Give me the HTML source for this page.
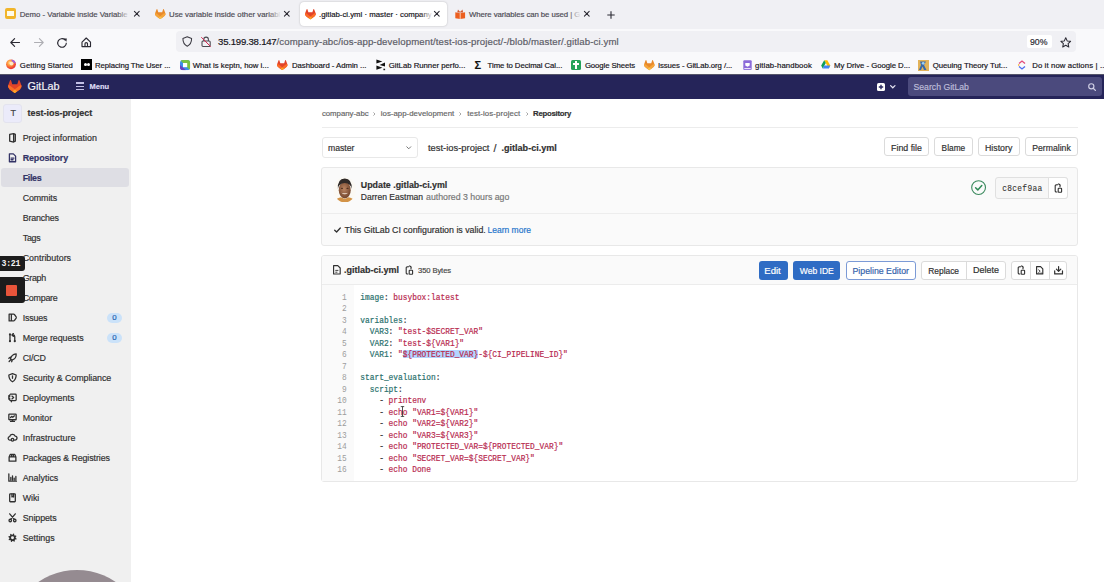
<!DOCTYPE html>
<html><head><meta charset="utf-8"><style>
html,body{margin:0;padding:0;width:1104px;height:582px;overflow:hidden;background:#fff;font-family:"Liberation Sans",sans-serif;}
#root{position:relative;width:1104px;height:582px;overflow:hidden;}
.t{position:absolute;white-space:pre;-webkit-text-stroke:0.18px currentColor;}
svg{overflow:visible;}
</style></head><body><div id="root">
<div style="position:absolute;left:0px;top:0px;width:1104px;height:29px;background:#f0f0f4;border-radius:0px;"></div>
<div style="position:absolute;left:300px;top:2px;width:147px;height:24px;background:#ffffff;border-radius:4px;box-shadow:0 0 2px rgba(0,0,0,0.25);"></div>
<div style="position:absolute;left:5px;top:8px;width:10.5px;height:11px;background:#f1b52a;border-radius:2px;"></div>
<div style="position:absolute;left:6.6px;top:11px;width:7.3px;height:5px;background:#fffbe8;border-radius:0px;"></div>
<svg style="position:absolute;left:133.8px;top:11.4px;" width="5.6" height="5.6" viewBox="0 0 5.6 5.6"><path d="M0.4 0.4 L5.2 5.2 M5.2 0.4 L0.4 5.2" stroke="#2b2a33" stroke-width="1.05" stroke-linecap="round"/></svg>
<svg style="position:absolute;left:283.8px;top:11.4px;" width="5.6" height="5.6" viewBox="0 0 5.6 5.6"><path d="M0.4 0.4 L5.2 5.2 M5.2 0.4 L0.4 5.2" stroke="#2b2a33" stroke-width="1.05" stroke-linecap="round"/></svg>
<svg style="position:absolute;left:433.8px;top:11.4px;" width="5.6" height="5.6" viewBox="0 0 5.6 5.6"><path d="M0.4 0.4 L5.2 5.2 M5.2 0.4 L0.4 5.2" stroke="#2b2a33" stroke-width="1.05" stroke-linecap="round"/></svg>
<svg style="position:absolute;left:583.8px;top:11.4px;" width="5.6" height="5.6" viewBox="0 0 5.6 5.6"><path d="M0.4 0.4 L5.2 5.2 M5.2 0.4 L0.4 5.2" stroke="#2b2a33" stroke-width="1.05" stroke-linecap="round"/></svg>
<svg style="position:absolute;left:607px;top:10.6px;" width="8" height="8" viewBox="0 0 8 8"><path d="M4 0.3 V7.7 M0.3 4 H7.7" stroke="#2b2a33" stroke-width="1.1"/></svg>
<div style="position:absolute;left:0px;top:29px;width:1104px;height:45px;background:#f9f9fb;border-radius:0px;"></div>
<div style="position:absolute;left:176px;top:31px;width:900px;height:21px;background:#f0f0f4;border-radius:4px;"></div>
<div style="position:absolute;left:1026.5px;top:35px;width:25.5px;height:13px;background:#ffffff;border-radius:2px;"></div>
<div style="position:absolute;left:0px;top:74px;width:1104px;height:24.5px;background:#252459;border-radius:0px;"></div>
<div style="position:absolute;left:908px;top:76.6px;width:194px;height:19.4px;background:#4b4a7d;border-radius:3px;"></div>
<div style="position:absolute;left:0px;top:98.5px;width:131px;height:484px;background:#f0f0f0;border-radius:0px;"></div>
<div style="position:absolute;left:3.3px;top:103.6px;width:19px;height:19px;background:#ebebfa;border-radius:3px;border:1px solid #e3e3ee;box-sizing:border-box;"></div>
<div style="position:absolute;left:1.4px;top:168px;width:127.8px;height:19px;background:#dedee4;border-radius:3px;"></div>
<div style="position:absolute;left:107px;top:312.8px;width:14.8px;height:10px;background:#cbe2f9;border-radius:5px;"></div>
<div style="position:absolute;left:107px;top:332.8px;width:14.8px;height:10px;background:#cbe2f9;border-radius:5px;"></div>
<svg style="position:absolute;left:373.2px;top:111.6px;" width="2.5" height="4" viewBox="0 0 2.5 4"><path d="M0.4 0.4 L2 2 L0.4 3.6" stroke="#8a8a8a" stroke-width="0.75" fill="none"/></svg>
<svg style="position:absolute;left:459.3px;top:111.6px;" width="2.5" height="4" viewBox="0 0 2.5 4"><path d="M0.4 0.4 L2 2 L0.4 3.6" stroke="#8a8a8a" stroke-width="0.75" fill="none"/></svg>
<svg style="position:absolute;left:525.5px;top:111.6px;" width="2.5" height="4" viewBox="0 0 2.5 4"><path d="M0.4 0.4 L2 2 L0.4 3.6" stroke="#8a8a8a" stroke-width="0.75" fill="none"/></svg>
<div style="position:absolute;left:321.5px;top:127px;width:756.5px;height:1px;background:#ececec;border-radius:0px;"></div>
<div style="position:absolute;left:321.6px;top:137.4px;width:96.8px;height:20.3px;background:#ffffff;border:1px solid #e8e8e8;box-sizing:border-box;border-radius:3px;"></div>
<div style="position:absolute;left:884px;top:137.4px;width:45px;height:19.1px;background:#ffffff;border:1px solid #dbdbdb;box-sizing:border-box;border-radius:3px;"></div>
<div style="position:absolute;left:934.2px;top:137.4px;width:38.39999999999998px;height:19.1px;background:#ffffff;border:1px solid #dbdbdb;box-sizing:border-box;border-radius:3px;"></div>
<div style="position:absolute;left:977.6px;top:137.4px;width:42.10000000000002px;height:19.1px;background:#ffffff;border:1px solid #dbdbdb;box-sizing:border-box;border-radius:3px;"></div>
<div style="position:absolute;left:1025.2px;top:137.4px;width:52.59999999999991px;height:19.1px;background:#ffffff;border:1px solid #dbdbdb;box-sizing:border-box;border-radius:3px;"></div>
<div style="position:absolute;left:321px;top:167px;width:757px;height:79px;background:#fafafa;border:1px solid #e8e8e8;box-sizing:border-box;border-radius:3px;"></div>
<div style="position:absolute;left:322px;top:213px;width:755px;height:1px;background:#ededed;border-radius:0px;"></div>
<div style="position:absolute;left:995.3px;top:177px;width:72.3px;height:21.7px;background:#f7f7f7;border:1px solid #e0e0e0;box-sizing:border-box;border-radius:3px;"></div>
<div style="position:absolute;left:1048.4px;top:177px;width:19.2px;height:21.7px;background:#ffffff;border:1px solid #e0e0e0;box-sizing:border-box;border-radius:3px;border-top-left-radius:0;border-bottom-left-radius:0;"></div>
<div style="position:absolute;left:321px;top:255px;width:757px;height:227px;background:#ffffff;border:1px solid #e8e8e8;box-sizing:border-box;border-radius:3px;"></div>
<div style="position:absolute;left:322px;top:256px;width:755px;height:28px;background:#fafafa;border-radius:2px;"></div>
<div style="position:absolute;left:322px;top:284px;width:755px;height:1px;background:#ececec;border-radius:0px;"></div>
<div style="position:absolute;left:322px;top:285px;width:32px;height:196px;background:#fafafa;border-radius:0px;"></div>
<div style="position:absolute;left:758.5px;top:260.9px;width:29.2px;height:18.7px;background:#2f6cc4;border-radius:3px;"></div>
<div style="position:absolute;left:793.1px;top:260.9px;width:47.3px;height:18.7px;background:#2f6cc4;border-radius:3px;"></div>
<div style="position:absolute;left:845.5px;top:260.9px;width:70.5px;height:18.7px;background:#ffffff;border:1px solid #7b9ad6;box-sizing:border-box;border-radius:3px;"></div>
<div style="position:absolute;left:921.4px;top:260.9px;width:84.2px;height:18.7px;background:#ffffff;border:1px solid #dbdbdb;box-sizing:border-box;border-radius:3px;"></div>
<div style="position:absolute;left:966.2px;top:260.9px;width:1px;height:18.7px;background:#dbdbdb;border-radius:0px;"></div>
<div style="position:absolute;left:1011.4px;top:260.9px;width:56px;height:18.7px;background:#ffffff;border:1px solid #dbdbdb;box-sizing:border-box;border-radius:3px;"></div>
<div style="position:absolute;left:1030.3px;top:260.9px;width:1px;height:18.7px;background:#dbdbdb;border-radius:0px;"></div>
<div style="position:absolute;left:1048.5px;top:260.9px;width:1px;height:18.7px;background:#dbdbdb;border-radius:0px;"></div>
<div style="position:absolute;left:402.762px;top:350.2px;width:75.488px;height:8.2px;background:#b4d5fe;border-radius:0px;"></div>
<svg style="position:absolute;left:155px;top:8.5px;" width="10.5" height="10.08" viewBox="0 0 25 24"><path d="m24.507 9.5-.034-.09L21.082.562a.896.896 0 0 0-1.694.091l-2.29 7.01H7.825L5.535.653a.898.898 0 0 0-1.694-.09L.451 9.411.416 9.5a6.297 6.297 0 0 0 2.09 7.278l.012.01.03.022 5.16 3.867 2.560 1.935 1.554 1.176a1.051 1.051 0 0 0 1.268 0l1.555-1.176 2.56-1.935 5.197-3.890.014-.01A6.297 6.297 0 0 0 24.507 9.5z" fill="#e8892a"/><path d="m24.507 9.5-.034-.09a11.44 11.44 0 0 0-4.56 2.051l-7.447 5.632 4.742 3.584 5.197-3.89.014-.01A6.297 6.297 0 0 0 24.507 9.5z" fill="#f5a53a"/><path d="m7.707 20.677 2.56 1.935 1.555 1.176a1.051 1.051 0 0 0 1.268 0l1.555-1.176 2.56-1.935-4.743-3.584-4.755 3.584z" fill="#f9c24a"/><path d="M5.01 11.461a11.43 11.43 0 0 0-4.56-2.05L.416 9.5a6.297 6.297 0 0 0 2.09 7.278l.012.01.03.022 5.16 3.867 4.745-3.584-7.444-5.632z" fill="#f5a53a"/></svg>
<svg style="position:absolute;left:305px;top:8.5px;" width="10.8" height="10.368000000000002" viewBox="0 0 25 24"><path d="m24.507 9.5-.034-.09L21.082.562a.896.896 0 0 0-1.694.091l-2.29 7.01H7.825L5.535.653a.898.898 0 0 0-1.694-.09L.451 9.411.416 9.5a6.297 6.297 0 0 0 2.09 7.278l.012.01.03.022 5.16 3.867 2.560 1.935 1.554 1.176a1.051 1.051 0 0 0 1.268 0l1.555-1.176 2.56-1.935 5.197-3.890.014-.01A6.297 6.297 0 0 0 24.507 9.5z" fill="#e24329"/><path d="m24.507 9.5-.034-.09a11.44 11.44 0 0 0-4.56 2.051l-7.447 5.632 4.742 3.584 5.197-3.89.014-.01A6.297 6.297 0 0 0 24.507 9.5z" fill="#fc6d26"/><path d="m7.707 20.677 2.56 1.935 1.555 1.176a1.051 1.051 0 0 0 1.268 0l1.555-1.176 2.56-1.935-4.743-3.584-4.755 3.584z" fill="#fca326"/><path d="M5.01 11.461a11.43 11.43 0 0 0-4.56-2.05L.416 9.5a6.297 6.297 0 0 0 2.09 7.278l.012.01.03.022 5.16 3.867 4.745-3.584-7.444-5.632z" fill="#fc6d26"/></svg>
<svg style="position:absolute;left:455px;top:8.8px;" width="10.4" height="10.2" viewBox="0 0 10.4 10.2"><path d="M2.2 3.6 L3 0.4 L4.6 2.4 H5.8 L7.4 0.4 L8.2 3.6 Z" fill="#d2582e"/><path d="M0.3 3.3 L5.2 4.2 L10.1 3.3 V9.2 L5.2 10 L0.3 9.2 Z" fill="#ec5f1f"/><path d="M5.2 4.2 V10" stroke="#ffd9c0" stroke-width="0.9"/></svg>
<svg style="position:absolute;left:9.5px;top:38px;" width="10" height="9" viewBox="0 0 10 9"><path d="M9.5 4.5 H0.8 M4.6 0.7 L0.8 4.5 L4.6 8.3" fill="none" stroke="#2b2a33" stroke-width="1.15" stroke-linecap="round" stroke-linejoin="round"/></svg>
<svg style="position:absolute;left:33.5px;top:38px;" width="10" height="9" viewBox="0 0 10 9"><path d="M0.5 4.5 H9.2 M5.4 0.7 L9.2 4.5 L5.4 8.3" fill="none" stroke="#aeaeb3" stroke-width="1.1" stroke-linecap="round" stroke-linejoin="round"/></svg>
<svg style="position:absolute;left:57px;top:37.5px;" width="10.5" height="10" viewBox="0 0 10.5 10"><path d="M9.3 5.2 A4.3 4.3 0 1 1 7.9 1.8" fill="none" stroke="#2b2a33" stroke-width="1.15" stroke-linecap="round" stroke-linejoin="round"/><path d="M6.4 0.6 L9.8 0.4 L9.4 3.8 Z" fill="#2b2a33"/></svg>
<svg style="position:absolute;left:80.8px;top:37px;" width="10.5" height="10.5" viewBox="0 0 10.5 10.5"><path d="M1 5.2 L5.25 1 L9.5 5.2 V9.6 H1 Z M4 9.6 V6.8 A1.25 1.25 0 0 1 6.5 6.8 V9.6" fill="none" stroke="#2b2a33" stroke-width="1.15" stroke-linecap="round" stroke-linejoin="round"/></svg>
<svg style="position:absolute;left:181.7px;top:36px;" width="10.5" height="11" viewBox="0 0 10.5 11"><path d="M5.25 0.8 L9.6 2.5 C9.6 6.5 8 8.9 5.25 10.2 C2.5 8.9 0.9 6.5 0.9 2.5 Z" fill="none" stroke="#3b3a42" stroke-width="1.05" stroke-linejoin="round"/></svg>
<svg style="position:absolute;left:200.5px;top:36px;" width="10" height="11" viewBox="0 0 10 11"><path d="M2.8 5 V3.4 A2.3 2.3 0 0 1 7.4 3.4 V5" fill="none" stroke="#4a4950" stroke-width="1.05"/><rect x="1" y="5" width="8.2" height="5.5" rx="1" fill="none" stroke="#4a4950" stroke-width="1.05"/><path d="M0.3 1.2 L9.6 10.6" stroke="#d7264f" stroke-width="1"/></svg>
<svg style="position:absolute;left:1060px;top:37px;" width="11.5" height="11" viewBox="0 0 11.5 11"><path d="M5.75 0.8 L7.2 3.9 L10.6 4.3 L8.1 6.6 L8.8 10 L5.75 8.3 L2.7 10 L3.4 6.6 L0.9 4.3 L4.3 3.9 Z" fill="none" stroke="#2b2a33" stroke-width="1.05" stroke-linejoin="round"/></svg>
<svg style="position:absolute;left:6.3px;top:59.3px;" width="10" height="10.3" viewBox="0 0 10 10.3"><defs><radialGradient id="ff" cx="0.4" cy="0.35" r="0.75"><stop offset="0" stop-color="#ffe9a8"/><stop offset="0.35" stop-color="#ff9a3c"/><stop offset="0.75" stop-color="#f0412f"/><stop offset="1" stop-color="#d92a6a"/></radialGradient></defs><circle cx="5" cy="5.3" r="4.9" fill="url(#ff)"/><path d="M5.5 0.6 A4.9 4.9 0 0 1 9.6 3.8 L8 4.5 A3 3 0 0 0 5.8 2.2 Z" fill="#9059ff" opacity="0.9"/><circle cx="5.6" cy="4.6" r="1.9" fill="#fff3d6" opacity="0.85"/></svg>
<div style="position:absolute;left:81px;top:58.8px;width:10.8px;height:11px;background:#000;border-radius:0px;"></div>
<div style="position:absolute;left:83.8px;top:63.1px;width:3.2px;height:3.2px;border-radius:50%;background:#fff"></div><div style="position:absolute;left:86.6px;top:63.1px;width:3.2px;height:3.2px;border-radius:50%;background:#fff"></div>
<svg style="position:absolute;left:179.6px;top:59.8px;" width="10.2" height="10.2" viewBox="0 0 10.2 10.2"><defs><clipPath id="kc"><rect x="0" y="0" width="10.2" height="10.2" rx="3"/></clipPath></defs><g clip-path="url(#kc)"><rect width="10.2" height="10.2" fill="#3d8fe8"/><path d="M0 0 H10.2 V10.2 Z" fill="#7ac143"/><path d="M0 5 L0 10.2 H6 Z" fill="#6b3fc0"/></g><rect x="3" y="3" width="4.2" height="4.2" fill="#fff"/></svg>
<svg style="position:absolute;left:277.1px;top:60.2px;" width="10.5" height="10.08" viewBox="0 0 25 24"><path d="m24.507 9.5-.034-.09L21.082.562a.896.896 0 0 0-1.694.091l-2.29 7.01H7.825L5.535.653a.898.898 0 0 0-1.694-.09L.451 9.411.416 9.5a6.297 6.297 0 0 0 2.09 7.278l.012.01.03.022 5.16 3.867 2.560 1.935 1.554 1.176a1.051 1.051 0 0 0 1.268 0l1.555-1.176 2.56-1.935 5.197-3.890.014-.01A6.297 6.297 0 0 0 24.507 9.5z" fill="#e24329"/><path d="m24.507 9.5-.034-.09a11.44 11.44 0 0 0-4.56 2.051l-7.447 5.632 4.742 3.584 5.197-3.89.014-.01A6.297 6.297 0 0 0 24.507 9.5z" fill="#fc6d26"/><path d="m7.707 20.677 2.56 1.935 1.555 1.176a1.051 1.051 0 0 0 1.268 0l1.555-1.176 2.56-1.935-4.743-3.584-4.755 3.584z" fill="#fca326"/><path d="M5.01 11.461a11.43 11.43 0 0 0-4.56-2.05L.416 9.5a6.297 6.297 0 0 0 2.09 7.278l.012.01.03.022 5.16 3.867 4.745-3.584-7.444-5.632z" fill="#fc6d26"/></svg>
<svg style="position:absolute;left:375.5px;top:58.5px;" width="10" height="12" viewBox="0 0 10 12"><path d="M0.4 0.5 L6.4 2.6 L0.4 4.5 Z M9 3.6 L3.6 5.9 L9 7.5 Z M0.4 6.6 L6.4 8.7 L0.4 10.7 Z" fill="#111"/><rect x="7.4" y="9.7" width="1.7" height="1.5" fill="#222"/></svg>
<div style="position:absolute;left:570.9px;top:59.6px;width:10.2px;height:10.3px;background:#23a25a;border-radius:1.5px;"></div>
<div style="position:absolute;left:575.3px;top:61px;width:1.4px;height:7.5px;background:#fff;border-radius:0px;"></div>
<div style="position:absolute;left:572.6px;top:63.3px;width:6.8px;height:1.4px;background:#fff;border-radius:0px;"></div>
<svg style="position:absolute;left:643.5px;top:60px;" width="10.6" height="10.175999999999998" viewBox="0 0 25 24"><path d="m24.507 9.5-.034-.09L21.082.562a.896.896 0 0 0-1.694.091l-2.29 7.01H7.825L5.535.653a.898.898 0 0 0-1.694-.09L.451 9.411.416 9.5a6.297 6.297 0 0 0 2.09 7.278l.012.01.03.022 5.16 3.867 2.560 1.935 1.554 1.176a1.051 1.051 0 0 0 1.268 0l1.555-1.176 2.56-1.935 5.197-3.890.014-.01A6.297 6.297 0 0 0 24.507 9.5z" fill="#e8892a"/><path d="m24.507 9.5-.034-.09a11.44 11.44 0 0 0-4.56 2.051l-7.447 5.632 4.742 3.584 5.197-3.89.014-.01A6.297 6.297 0 0 0 24.507 9.5z" fill="#f5a53a"/><path d="m7.707 20.677 2.56 1.935 1.555 1.176a1.051 1.051 0 0 0 1.268 0l1.555-1.176 2.56-1.935-4.743-3.584-4.755 3.584z" fill="#f9c24a"/><path d="M5.01 11.461a11.43 11.43 0 0 0-4.56-2.05L.416 9.5a6.297 6.297 0 0 0 2.09 7.278l.012.01.03.022 5.16 3.867 4.745-3.584-7.444-5.632z" fill="#f5a53a"/></svg>
<svg style="position:absolute;left:742.9px;top:59.8px;" width="9" height="10.5" viewBox="0 0 9 10.5"><rect x="0.3" y="0.3" width="8.4" height="9.6" rx="1" fill="#8c6bd9"/><path d="M2.3 3 V5.5 L4.5 6.8 L6.7 5.5 V3" fill="#fff"/><rect x="1.3" y="8.2" width="6.4" height="0.9" fill="#fff"/></svg>
<svg style="position:absolute;left:821.3px;top:60px;" width="9.5" height="9" viewBox="0 0 9.5 9"><path d="M3.2 0.3 H6.3 L9.3 5.6 L7.8 8.4 Z" fill="#fbbc04"/><path d="M3.2 0.3 L0.2 5.6 L1.7 8.4 L4.8 3 Z" fill="#0f9d58"/><path d="M1.7 8.4 H7.8 L9.3 5.6 H3.2 Z" fill="#4285f4"/></svg>
<svg style="position:absolute;left:918.3px;top:59.5px;" width="11" height="11" viewBox="0 0 11 11"><rect width="11" height="11" fill="#e2b35a"/><path d="M2 1.5 H8 L6 5 L8.5 10 H6 L4.5 6.5 L3 10 H1 L3 5 Z" fill="#3a6aa8"/><circle cx="5.2" cy="3.3" r="1.4" fill="#9fd0f0"/></svg>
<svg style="position:absolute;left:1018px;top:60px;" width="8" height="10" viewBox="0 0 8 10"><path d="M1 3.6 L4 1 L7 3.6" stroke="#e24b7a" stroke-width="1.3" fill="none"/><path d="M1 6.4 L4 9 L7 6.4" stroke="#4b6cf0" stroke-width="1.3" fill="none"/><path d="M0.7 4.2 V5.8" stroke="#f4a91d" stroke-width="1.2"/></svg>
<svg style="position:absolute;left:7.5px;top:80px;" width="13.6" height="13.056" viewBox="0 0 25 24"><path d="m24.507 9.5-.034-.09L21.082.562a.896.896 0 0 0-1.694.091l-2.29 7.01H7.825L5.535.653a.898.898 0 0 0-1.694-.09L.451 9.411.416 9.5a6.297 6.297 0 0 0 2.09 7.278l.012.01.03.022 5.16 3.867 2.560 1.935 1.554 1.176a1.051 1.051 0 0 0 1.268 0l1.555-1.176 2.56-1.935 5.197-3.890.014-.01A6.297 6.297 0 0 0 24.507 9.5z" fill="#e24329"/><path d="m24.507 9.5-.034-.09a11.44 11.44 0 0 0-4.56 2.051l-7.447 5.632 4.742 3.584 5.197-3.89.014-.01A6.297 6.297 0 0 0 24.507 9.5z" fill="#fc6d26"/><path d="m7.707 20.677 2.56 1.935 1.555 1.176a1.051 1.051 0 0 0 1.268 0l1.555-1.176 2.56-1.935-4.743-3.584-4.755 3.584z" fill="#fca326"/><path d="M5.01 11.461a11.43 11.43 0 0 0-4.56-2.05L.416 9.5a6.297 6.297 0 0 0 2.09 7.278l.012.01.03.022 5.16 3.867 4.745-3.584-7.444-5.632z" fill="#fc6d26"/></svg>
<div style="position:absolute;left:75.8px;top:82.4px;width:8.4px;height:1.7px;background:#c3c1e6;border-radius:0px;"></div>
<div style="position:absolute;left:75.8px;top:85.5px;width:8.4px;height:1.7px;background:#c3c1e6;border-radius:0px;"></div>
<div style="position:absolute;left:75.8px;top:88.60000000000001px;width:8.4px;height:1.7px;background:#c3c1e6;border-radius:0px;"></div>
<svg style="position:absolute;left:876.6px;top:82.6px;" width="8" height="8" viewBox="0 0 8 8"><rect x="0" y="0" width="8" height="8" rx="1.6" fill="#ffffff"/><path d="M4 1.8 V6.2 M1.8 4 H6.2" stroke="#292961" stroke-width="1.4"/></svg>
<svg style="position:absolute;left:889.8px;top:85px;" width="5.6" height="3.6" viewBox="0 0 5.6 3.6"><path d="M0.6 0.6 L2.8 2.8 L5 0.6" stroke="#e5e4f2" stroke-width="1.2" fill="none" stroke-linecap="round"/></svg>
<svg style="position:absolute;left:1087.5px;top:82.6px;" width="8" height="8" viewBox="0 0 8 8"><circle cx="3.3" cy="3.3" r="2.6" stroke="#d0cfe5" stroke-width="1.15" fill="none"/><path d="M5.2 5.2 L7.4 7.4" stroke="#d0cfe5" stroke-width="1.3" stroke-linecap="round"/></svg>
<svg style="position:absolute;left:8.2px;top:132.7px;" width="9" height="9.6" viewBox="0 0 16 17"><path d="M3 2.5 L10 1 L13 2.5 V14.5 L10 16 L3 14.5 Z M10 1 V16" fill="none" stroke="#303030" stroke-width="2.3" stroke-linejoin="round" stroke-linecap="round"/></svg>
<svg style="position:absolute;left:8.2px;top:152.7px;" width="9" height="9.6" viewBox="0 0 16 17"><path d="M2.5 1.5 H9.5 L13.5 5.5 V15.5 H2.5 Z M5.5 9 H10.5 M5.5 12 H9" fill="none" stroke="#333366" stroke-width="2.3" stroke-linejoin="round" stroke-linecap="round"/></svg>
<svg style="position:absolute;left:8.2px;top:312.7px;" width="9" height="9.6" viewBox="0 0 16 17"><path d="M2 2 H10 Q11 2 11.6 2.8 L14.5 7 Q15 8 14.5 9 L11.6 13.2 Q11 14 10 14 H2 Z M6 2 V14" fill="none" stroke="#303030" stroke-width="2.3" stroke-linejoin="round" stroke-linecap="round"/></svg>
<svg style="position:absolute;left:8.2px;top:332.7px;" width="9" height="9.6" viewBox="0 0 16 17"><path d="M3.5 3 V14 M12 14 V6.5 Q12 3.5 9 3.5 H7.5 M9.5 1 L7 3.5 L9.5 6" fill="none" stroke="#303030" stroke-width="2.3" stroke-linejoin="round" stroke-linecap="round"/><circle cx="3.5" cy="2.5" r="1.9" fill="#303030"/><circle cx="3.5" cy="14.5" r="1.9" fill="#303030"/><circle cx="12" cy="14.5" r="1.9" fill="#303030"/></svg>
<svg style="position:absolute;left:8.2px;top:352.7px;" width="9" height="9.6" viewBox="0 0 16 17"><path d="M14.5 1.5 C9 2 5.5 5.5 4.5 10.5 L6.5 12.5 C11.5 11.5 15 8 14.5 1.5 Z M1.5 9.5 L4 7.5 M7.5 13 L6.5 15.5 M2 15 L4 13" fill="none" stroke="#303030" stroke-width="2.3" stroke-linejoin="round" stroke-linecap="round"/></svg>
<svg style="position:absolute;left:8.2px;top:372.7px;" width="9" height="9.6" viewBox="0 0 16 17"><path d="M8 1 L14.5 3.5 C14.5 9.5 12 13.5 8 15.5 C4 13.5 1.5 9.5 1.5 3.5 Z M8 5 V9.5" fill="none" stroke="#303030" stroke-width="2.3" stroke-linejoin="round" stroke-linecap="round"/></svg>
<svg style="position:absolute;left:8.2px;top:392.7px;" width="9" height="9.6" viewBox="0 0 16 17"><path d="M4.5 2 H13 A1.5 1.5 0 0 1 14.5 3.5 V12 A1.5 1.5 0 0 1 13 13.5 H4.5 A1.5 1.5 0 0 1 3 12 V9.5 M3 6.5 V3.5 M6 14.5 V15.5 M7 5.5 L10 8 L7 10.5" fill="none" stroke="#303030" stroke-width="2.3" stroke-linejoin="round" stroke-linecap="round"/><path d="M1.5 4.5 L1.5 11" fill="none" stroke="#303030" stroke-width="2.3" stroke-linejoin="round" stroke-linecap="round"/></svg>
<svg style="position:absolute;left:8.2px;top:412.7px;" width="9" height="9.6" viewBox="0 0 16 17"><rect x="1.5" y="2" width="13" height="10" rx="1" fill="none" stroke="#303030" stroke-width="2.3" stroke-linejoin="round" stroke-linecap="round"/><path d="M4.5 15 H11.5 M8 12 V15 M4.5 8 L6.5 6 L8.5 7.5 L11.5 5" fill="none" stroke="#303030" stroke-width="2.3" stroke-linejoin="round" stroke-linecap="round"/></svg>
<svg style="position:absolute;left:8.2px;top:432.7px;" width="9" height="9.6" viewBox="0 0 16 17"><path d="M4.5 12.5 H3.5 A3 3 0 0 1 3 6.5 A5 5 0 0 1 12.5 5.5 A3.5 3.5 0 0 1 12.5 12.5 H11.5" fill="none" stroke="#303030" stroke-width="2.3" stroke-linejoin="round" stroke-linecap="round"/><circle cx="8" cy="12" r="2.3" fill="none" stroke="#303030" stroke-width="2.3" stroke-linejoin="round" stroke-linecap="round"/></svg>
<svg style="position:absolute;left:8.2px;top:452.7px;" width="9" height="9.6" viewBox="0 0 16 17"><path d="M2 7 L4 2.5 H12 L14 7 V14.5 H2 Z M2 7 H14 M6.5 4 V7 M9.5 4 V7" fill="none" stroke="#303030" stroke-width="2.3" stroke-linejoin="round" stroke-linecap="round"/></svg>
<svg style="position:absolute;left:8.2px;top:472.7px;" width="9" height="9.6" viewBox="0 0 16 17"><path d="M1.5 1.5 V14.5 H15 M5 8 V12 M8 5 V12 M11 9 V12 M14 6 V12" fill="none" stroke="#303030" stroke-width="2.3" stroke-linejoin="round" stroke-linecap="round"/></svg>
<svg style="position:absolute;left:8.2px;top:492.7px;" width="9" height="9.6" viewBox="0 0 16 17"><rect x="3" y="1.5" width="10" height="14" rx="1.2" fill="none" stroke="#303030" stroke-width="2.3" stroke-linejoin="round" stroke-linecap="round"/><path d="M7 1.5 V7 L8.5 6 L10 7 V1.5" fill="none" stroke="#303030" stroke-width="2.3" stroke-linejoin="round" stroke-linecap="round"/></svg>
<svg style="position:absolute;left:8.2px;top:512.7px;" width="9" height="9.6" viewBox="0 0 16 17"><path d="M3 1.5 L11 11 M13 1.5 L5 11" fill="none" stroke="#303030" stroke-width="2.3" stroke-linejoin="round" stroke-linecap="round"/><circle cx="4" cy="13.3" r="2.2" fill="none" stroke="#303030" stroke-width="2.3" stroke-linejoin="round" stroke-linecap="round"/><circle cx="12" cy="13.3" r="2.2" fill="none" stroke="#303030" stroke-width="2.3" stroke-linejoin="round" stroke-linecap="round"/></svg>
<svg style="position:absolute;left:8.2px;top:532.7px;" width="9" height="9.6" viewBox="0 0 16 17"><path d="M8.00 2.90 L9.48 1.05 L10.91 1.48 L11.11 3.84 L11.96 4.54 L14.32 4.28 L15.02 5.59 L13.49 7.41 L13.60 8.50 L15.45 9.98 L15.02 11.41 L12.66 11.61 L11.96 12.46 L12.22 14.82 L10.91 15.52 L9.09 13.99 L8.00 14.10 L6.52 15.95 L5.09 15.52 L4.89 13.16 L4.04 12.46 L1.68 12.72 L0.98 11.41 L2.51 9.59 L2.40 8.50 L0.55 7.02 L0.98 5.59 L3.34 5.39 L4.04 4.54 L3.78 2.18 L5.09 1.48 L6.91 3.01 Z" fill="#303030"/><circle cx="8" cy="8.5" r="2.6" fill="#f0f0f0"/></svg>
<svg style="position:absolute;left:405.8px;top:146px;" width="5.5" height="3.5" viewBox="0 0 5.5 3.5"><path d="M0.5 0.5 L2.75 2.8 L5 0.5" stroke="#666" stroke-width="0.9" fill="none"/></svg>
<svg style="position:absolute;left:332.5px;top:177px;" width="23.5" height="25.5" viewBox="0 0 23.5 25.5"><defs><clipPath id="av"><ellipse cx="11.75" cy="12.75" rx="11.2" ry="12.6"/></clipPath><radialGradient id="fg" cx="0.45" cy="0.42" r="0.62"><stop offset="0" stop-color="#b98462"/><stop offset="1" stop-color="#6e4129"/></radialGradient></defs><ellipse cx="11.75" cy="12.75" rx="11.2" ry="12.6" fill="#fbf9f4"/><g clip-path="url(#av)"><path d="M1.5 25 Q4 20.5 8 20.2 L11.75 22 L15.5 20.2 Q19.5 20.5 22 25 Z" fill="#d39347"/><ellipse cx="11.75" cy="13.2" rx="6" ry="8.3" fill="url(#fg)"/><path d="M4.9 12 Q4.2 1.6 11.75 1.4 Q19.3 1.6 18.6 12 Q18 6.2 11.75 5.9 Q5.5 6.2 4.9 12 Z" fill="#302a28"/><path d="M8.4 15.8 Q11.75 18.8 15.1 15.8 Q11.75 16.9 8.4 15.8 Z" fill="#f3e6d8"/><ellipse cx="9" cy="11.3" rx="1.1" ry="0.55" fill="#3a2216"/><ellipse cx="14.5" cy="11.3" rx="1.1" ry="0.55" fill="#3a2216"/></g></svg>
<svg style="position:absolute;left:971px;top:180px;" width="15.2" height="15.2" viewBox="0 0 15.2 15.2"><circle cx="7.6" cy="7.6" r="6.9" fill="none" stroke="#3b8a5e" stroke-width="1.1"/><path d="M4.6 7.8 L6.8 9.9 L10.8 5.6" fill="none" stroke="#2f8a56" stroke-width="1.5" stroke-linecap="round" stroke-linejoin="round"/></svg>
<svg style="position:absolute;left:1053.5px;top:182.5px;" width="8.0" height="10.0" viewBox="0 0 8 10"><path d="M3 1.8 H2.2 A1 1 0 0 0 1.2 2.8 V8 A1 1 0 0 0 2.2 9 H3.3 M4.7 1 L6 1.8 V4.3" fill="none" stroke="#303030" stroke-width="1.1" stroke-linejoin="round"/><path d="M2.8 2.4 L4.6 0.8 L6.2 2.4" fill="none" stroke="#303030" stroke-width="1"/><rect x="4.2" y="5.2" width="3.4" height="4.1" rx="0.6" fill="none" stroke="#303030" stroke-width="1.1"/></svg>
<svg style="position:absolute;left:333.8px;top:226.6px;" width="7" height="6" viewBox="0 0 7 6"><path d="M0.7 3.2 L2.6 5 L6.3 1" fill="none" stroke="#303030" stroke-width="1.3" stroke-linecap="round" stroke-linejoin="round"/></svg>
<svg style="position:absolute;left:332.7px;top:265.3px;" width="7.8" height="9.6" viewBox="0 0 7.8 9.6"><path d="M0.6 0.6 H4.8 L7.2 3 V9 H0.6 Z" fill="none" stroke="#303030" stroke-width="1.15" stroke-linejoin="round"/><path d="M2.3 5.4 H5.4 M2.3 7.2 H4.4" stroke="#303030" stroke-width="0.9"/></svg>
<svg style="position:absolute;left:404.9px;top:265.2px;" width="8.0" height="10.0" viewBox="0 0 8 10"><path d="M3 1.8 H2.2 A1 1 0 0 0 1.2 2.8 V8 A1 1 0 0 0 2.2 9 H3.3 M4.7 1 L6 1.8 V4.3" fill="none" stroke="#303030" stroke-width="1.1" stroke-linejoin="round"/><path d="M2.8 2.4 L4.6 0.8 L6.2 2.4" fill="none" stroke="#303030" stroke-width="1"/><rect x="4.2" y="5.2" width="3.4" height="4.1" rx="0.6" fill="none" stroke="#303030" stroke-width="1.1"/></svg>
<svg style="position:absolute;left:1017px;top:265.2px;" width="8.0" height="10.0" viewBox="0 0 8 10"><path d="M3 1.8 H2.2 A1 1 0 0 0 1.2 2.8 V8 A1 1 0 0 0 2.2 9 H3.3 M4.7 1 L6 1.8 V4.3" fill="none" stroke="#303030" stroke-width="1.1" stroke-linejoin="round"/><path d="M2.8 2.4 L4.6 0.8 L6.2 2.4" fill="none" stroke="#303030" stroke-width="1"/><rect x="4.2" y="5.2" width="3.4" height="4.1" rx="0.6" fill="none" stroke="#303030" stroke-width="1.1"/></svg>
<svg style="position:absolute;left:1035.8px;top:265.7px;" width="7.4" height="8.5" viewBox="0 0 7.4 8.5"><path d="M0.6 0.6 H4.6 L6.8 2.8 V7.9 H0.6 Z" fill="none" stroke="#303030" stroke-width="1.15" stroke-linejoin="round"/><path d="M2.3 3.6 L4.2 5.2 L2.3 6.8 M4.6 6.9 H5.6" fill="none" stroke="#303030" stroke-width="0.9"/></svg>
<svg style="position:absolute;left:1053.8px;top:265.6px;" width="9.2" height="8.6" viewBox="0 0 9.2 8.6"><path d="M4.6 0.6 V5.2 M2.4 3.2 L4.6 5.4 L6.8 3.2" fill="none" stroke="#303030" stroke-width="1.2" stroke-linecap="round" stroke-linejoin="round"/><path d="M0.7 4.8 V7.9 H8.5 V4.8" fill="none" stroke="#303030" stroke-width="1.2" stroke-linecap="round" stroke-linejoin="round"/></svg>
<div class="t" style="left:19.7px;top:10.23px;font-size:7.80px;line-height:9.75px;color:#4d4c54;font-weight:400;font-family:'Liberation Sans',sans-serif;letter-spacing:-0.017px;">Demo - Variable inside Variable</div>
<div class="t" style="left:169px;top:10.23px;font-size:7.80px;line-height:9.75px;color:#4d4c54;font-weight:400;font-family:'Liberation Sans',sans-serif;letter-spacing:0.012px;">Use variable inside other variabl</div>
<div class="t" style="left:319px;top:10.23px;font-size:7.80px;line-height:9.75px;color:#15141a;font-weight:400;font-family:'Liberation Sans',sans-serif;letter-spacing:0.000px;">.gitlab-ci.yml · master · company</div>
<div class="t" style="left:469px;top:10.23px;font-size:7.80px;line-height:9.75px;color:#4d4c54;font-weight:400;font-family:'Liberation Sans',sans-serif;letter-spacing:-0.069px;">Where variables can be used | G</div>
<div class="t" style="left:1030px;top:36.94px;font-size:8.74px;line-height:10.93px;color:#2b2a33;font-weight:400;font-family:'Liberation Sans',sans-serif;letter-spacing:0.000px;">90%</div>
<div class="t" style="left:218.1px;top:36.40px;font-size:9.60px;line-height:12.0px;color:#15141a;font-weight:400;font-family:'Liberation Sans',sans-serif;letter-spacing:-0.230px;">35.199.38.147</div>
<div class="t" style="left:276.5px;top:36.40px;font-size:9.60px;line-height:12.0px;color:#5b5b66;font-weight:400;font-family:'Liberation Sans',sans-serif;letter-spacing:0.123px;">/company-abc/ios-app-development/test-ios-project/-/blob/master/.gitlab-ci.yml</div>
<div class="t" style="left:19.8px;top:60.86px;font-size:7.75px;line-height:9.69px;color:#15141a;font-weight:400;font-family:'Liberation Sans',sans-serif;letter-spacing:0.072px;">Getting Started</div>
<div class="t" style="left:95.1px;top:60.86px;font-size:7.75px;line-height:9.69px;color:#15141a;font-weight:400;font-family:'Liberation Sans',sans-serif;letter-spacing:-0.076px;">Replacing The User ...</div>
<div class="t" style="left:192.7px;top:60.86px;font-size:7.75px;line-height:9.69px;color:#15141a;font-weight:400;font-family:'Liberation Sans',sans-serif;letter-spacing:0.013px;">What is keptn, how i...</div>
<div class="t" style="left:292px;top:60.86px;font-size:7.75px;line-height:9.69px;color:#15141a;font-weight:400;font-family:'Liberation Sans',sans-serif;letter-spacing:-0.026px;">Dashboard - Admin ...</div>
<div class="t" style="left:388.7px;top:60.86px;font-size:7.75px;line-height:9.69px;color:#15141a;font-weight:400;font-family:'Liberation Sans',sans-serif;letter-spacing:-0.004px;">GitLab Runner perfo...</div>
<div class="t" style="left:487.6px;top:60.86px;font-size:7.75px;line-height:9.69px;color:#15141a;font-weight:400;font-family:'Liberation Sans',sans-serif;letter-spacing:-0.056px;">Time to Decimal Cal...</div>
<div class="t" style="left:584.9px;top:60.86px;font-size:7.75px;line-height:9.69px;color:#15141a;font-weight:400;font-family:'Liberation Sans',sans-serif;letter-spacing:-0.082px;">Google Sheets</div>
<div class="t" style="left:657.9px;top:60.86px;font-size:7.75px;line-height:9.69px;color:#15141a;font-weight:400;font-family:'Liberation Sans',sans-serif;letter-spacing:-0.081px;">Issues - GitLab.org /...</div>
<div class="t" style="left:755.1px;top:60.86px;font-size:7.75px;line-height:9.69px;color:#15141a;font-weight:400;font-family:'Liberation Sans',sans-serif;letter-spacing:0.110px;">gitlab-handbook</div>
<div class="t" style="left:834.1px;top:60.86px;font-size:7.75px;line-height:9.69px;color:#15141a;font-weight:400;font-family:'Liberation Sans',sans-serif;letter-spacing:-0.034px;">My Drive - Google D...</div>
<div class="t" style="left:932.7px;top:60.86px;font-size:7.75px;line-height:9.69px;color:#15141a;font-weight:400;font-family:'Liberation Sans',sans-serif;letter-spacing:-0.010px;">Queuing Theory Tut...</div>
<div class="t" style="left:1032.2px;top:60.86px;font-size:7.75px;line-height:9.69px;color:#15141a;font-weight:400;font-family:'Liberation Sans',sans-serif;letter-spacing:0.118px;">Do it now actions | ...</div>
<div class="t" style="left:27.5px;top:80.31px;font-size:10.86px;line-height:13.58px;color:#ffffff;font-weight:400;font-family:'Liberation Sans',sans-serif;letter-spacing:0.000px;opacity:0.95;">GitLab</div>
<div class="t" style="left:89.5px;top:82.33px;font-size:7.47px;line-height:9.34px;color:#dedcf4;font-weight:700;font-family:'Liberation Sans',sans-serif;letter-spacing:0.000px;">Menu</div>
<div class="t" style="left:913.5px;top:81.78px;font-size:8.68px;line-height:10.85px;color:#bdbcd8;font-weight:400;font-family:'Liberation Sans',sans-serif;letter-spacing:0.000px;">Search GitLab</div>
<div class="t" style="left:10.4px;top:107.77px;font-size:9.00px;line-height:11.25px;color:#444444;font-weight:400;font-family:'Liberation Sans',sans-serif;letter-spacing:0.000px;">T</div>
<div class="t" style="left:27.5px;top:108.39px;font-size:8.97px;line-height:11.21px;color:#303030;font-weight:700;font-family:'Liberation Sans',sans-serif;letter-spacing:0.000px;">test-ios-project</div>
<div class="t" style="left:22.7px;top:133.04px;font-size:8.90px;line-height:11.12px;color:#303030;font-weight:400;font-family:'Liberation Sans',sans-serif;letter-spacing:0.011px;">Project information</div>
<div class="t" style="left:22.7px;top:153.04px;font-size:8.90px;line-height:11.12px;color:#333366;font-weight:700;font-family:'Liberation Sans',sans-serif;letter-spacing:-0.109px;">Repository</div>
<div class="t" style="left:22.7px;top:172.94px;font-size:8.90px;line-height:11.12px;color:#333366;font-weight:700;font-family:'Liberation Sans',sans-serif;letter-spacing:-0.336px;">Files</div>
<div class="t" style="left:22.7px;top:193.04px;font-size:8.90px;line-height:11.12px;color:#303030;font-weight:400;font-family:'Liberation Sans',sans-serif;letter-spacing:-0.101px;">Commits</div>
<div class="t" style="left:22.7px;top:212.94px;font-size:8.90px;line-height:11.12px;color:#303030;font-weight:400;font-family:'Liberation Sans',sans-serif;letter-spacing:-0.175px;">Branches</div>
<div class="t" style="left:22.7px;top:232.94px;font-size:8.90px;line-height:11.12px;color:#303030;font-weight:400;font-family:'Liberation Sans',sans-serif;letter-spacing:-0.225px;">Tags</div>
<div class="t" style="left:22.7px;top:252.94px;font-size:8.90px;line-height:11.12px;color:#303030;font-weight:400;font-family:'Liberation Sans',sans-serif;letter-spacing:0.002px;">Contributors</div>
<div class="t" style="left:22.7px;top:272.94px;font-size:8.90px;line-height:11.12px;color:#303030;font-weight:400;font-family:'Liberation Sans',sans-serif;letter-spacing:-0.287px;">Graph</div>
<div class="t" style="left:22.7px;top:292.94px;font-size:8.90px;line-height:11.12px;color:#303030;font-weight:400;font-family:'Liberation Sans',sans-serif;letter-spacing:-0.243px;">Compare</div>
<div class="t" style="left:22.7px;top:312.84px;font-size:8.90px;line-height:11.12px;color:#303030;font-weight:400;font-family:'Liberation Sans',sans-serif;letter-spacing:-0.170px;">Issues</div>
<div class="t" style="left:22.7px;top:332.84px;font-size:8.90px;line-height:11.12px;color:#303030;font-weight:400;font-family:'Liberation Sans',sans-serif;letter-spacing:-0.060px;">Merge requests</div>
<div class="t" style="left:22.7px;top:352.84px;font-size:8.90px;line-height:11.12px;color:#303030;font-weight:400;font-family:'Liberation Sans',sans-serif;letter-spacing:-0.265px;">CI/CD</div>
<div class="t" style="left:22.7px;top:372.84px;font-size:8.90px;line-height:11.12px;color:#303030;font-weight:400;font-family:'Liberation Sans',sans-serif;letter-spacing:-0.058px;">Security &amp; Compliance</div>
<div class="t" style="left:22.7px;top:392.84px;font-size:8.90px;line-height:11.12px;color:#303030;font-weight:400;font-family:'Liberation Sans',sans-serif;letter-spacing:-0.013px;">Deployments</div>
<div class="t" style="left:22.7px;top:412.84px;font-size:8.90px;line-height:11.12px;color:#303030;font-weight:400;font-family:'Liberation Sans',sans-serif;letter-spacing:-0.025px;">Monitor</div>
<div class="t" style="left:22.7px;top:432.84px;font-size:8.90px;line-height:11.12px;color:#303030;font-weight:400;font-family:'Liberation Sans',sans-serif;letter-spacing:0.033px;">Infrastructure</div>
<div class="t" style="left:22.7px;top:452.84px;font-size:8.90px;line-height:11.12px;color:#303030;font-weight:400;font-family:'Liberation Sans',sans-serif;letter-spacing:-0.102px;">Packages &amp; Registries</div>
<div class="t" style="left:22.7px;top:472.84px;font-size:8.90px;line-height:11.12px;color:#303030;font-weight:400;font-family:'Liberation Sans',sans-serif;letter-spacing:0.010px;">Analytics</div>
<div class="t" style="left:22.7px;top:492.84px;font-size:8.90px;line-height:11.12px;color:#303030;font-weight:400;font-family:'Liberation Sans',sans-serif;letter-spacing:-0.051px;">Wiki</div>
<div class="t" style="left:22.7px;top:512.84px;font-size:8.90px;line-height:11.12px;color:#303030;font-weight:400;font-family:'Liberation Sans',sans-serif;letter-spacing:-0.080px;">Snippets</div>
<div class="t" style="left:22.7px;top:532.84px;font-size:8.90px;line-height:11.12px;color:#303030;font-weight:400;font-family:'Liberation Sans',sans-serif;letter-spacing:-0.020px;">Settings</div>
<div class="t" style="left:112.2px;top:313.46px;font-size:7.91px;line-height:9.89px;color:#1f5fb0;font-weight:400;font-family:'Liberation Sans',sans-serif;letter-spacing:0.000px;">0</div>
<div class="t" style="left:112.2px;top:333.46px;font-size:7.91px;line-height:9.89px;color:#1f5fb0;font-weight:400;font-family:'Liberation Sans',sans-serif;letter-spacing:0.000px;">0</div>
<div class="t" style="left:321.9px;top:109.22px;font-size:7.80px;line-height:9.75px;color:#666666;font-weight:400;font-family:'Liberation Sans',sans-serif;letter-spacing:-0.002px;">company-abc</div>
<div class="t" style="left:380.8px;top:109.22px;font-size:7.80px;line-height:9.75px;color:#666666;font-weight:400;font-family:'Liberation Sans',sans-serif;letter-spacing:0.035px;">ios-app-development</div>
<div class="t" style="left:467.2px;top:109.22px;font-size:7.80px;line-height:9.75px;color:#666666;font-weight:400;font-family:'Liberation Sans',sans-serif;letter-spacing:0.128px;">test-ios-project</div>
<div class="t" style="left:533px;top:109.22px;font-size:7.80px;line-height:9.75px;color:#303030;font-weight:700;font-family:'Liberation Sans',sans-serif;letter-spacing:-0.254px;">Repository</div>
<div class="t" style="left:328px;top:143.18px;font-size:8.67px;line-height:10.84px;color:#303030;font-weight:400;font-family:'Liberation Sans',sans-serif;letter-spacing:0.000px;">master</div>
<div class="t" style="left:428px;top:142.54px;font-size:9.38px;line-height:11.72px;color:#303030;font-weight:400;font-family:'Liberation Sans',sans-serif;letter-spacing:0.000px;">test-ios-project</div>
<div class="t" style="left:493.5px;top:141.66px;font-size:10.79px;line-height:13.49px;color:#303030;font-weight:400;font-family:'Liberation Sans',sans-serif;letter-spacing:0.000px;">/</div>
<div class="t" style="left:501.5px;top:142.75px;font-size:9.05px;line-height:11.31px;color:#303030;font-weight:700;font-family:'Liberation Sans',sans-serif;letter-spacing:0.000px;">.gitlab-ci.yml</div>
<div class="t" style="left:891.1px;top:142.50px;font-size:8.80px;line-height:11.0px;color:#303030;font-weight:400;font-family:'Liberation Sans',sans-serif;letter-spacing:0.000px;">Find file</div>
<div class="t" style="left:941.6000000000001px;top:142.79px;font-size:8.33px;line-height:10.41px;color:#303030;font-weight:400;font-family:'Liberation Sans',sans-serif;letter-spacing:0.000px;">Blame</div>
<div class="t" style="left:984.95px;top:142.50px;font-size:8.81px;line-height:11.01px;color:#303030;font-weight:400;font-family:'Liberation Sans',sans-serif;letter-spacing:0.000px;">History</div>
<div class="t" style="left:1032.25px;top:142.59px;font-size:8.66px;line-height:10.82px;color:#303030;font-weight:400;font-family:'Liberation Sans',sans-serif;letter-spacing:0.000px;">Permalink</div>
<div class="t" style="left:360.8px;top:179.77px;font-size:8.85px;line-height:11.06px;color:#303030;font-weight:700;font-family:'Liberation Sans',sans-serif;letter-spacing:0.000px;">Update .gitlab-ci.yml</div>
<div class="t" style="left:360.8px;top:192.35px;font-size:8.56px;line-height:10.7px;color:#303030;font-weight:400;font-family:'Liberation Sans',sans-serif;letter-spacing:0.000px;">Darren Eastman</div>
<div class="t" style="left:426px;top:192.21px;font-size:8.78px;line-height:10.98px;color:#777777;font-weight:400;font-family:'Liberation Sans',sans-serif;letter-spacing:0.000px;">authored 3 hours ago</div>
<div class="t" style="left:344.5px;top:224.58px;font-size:8.84px;line-height:11.05px;color:#303030;font-weight:400;font-family:'Liberation Sans',sans-serif;letter-spacing:0.000px;">This GitLab CI configuration is valid.</div>
<div class="t" style="left:487.5px;top:224.79px;font-size:8.51px;line-height:10.63px;color:#1f75cb;font-weight:400;font-family:'Liberation Sans',sans-serif;letter-spacing:0.000px;">Learn more</div>
<div class="t" style="left:1002.3px;top:184.30px;font-size:7.84px;line-height:9.8px;color:#333333;font-weight:400;font-family:'Liberation Mono',monospace;letter-spacing:0.320px;transform:scaleY(1.15);-webkit-text-stroke:0.1px currentColor;">c8cef9aa</div>
<div class="t" style="left:344px;top:264.68px;font-size:9.00px;line-height:11.25px;color:#303030;font-weight:700;font-family:'Liberation Sans',sans-serif;letter-spacing:0.000px;">.gitlab-ci.yml</div>
<div class="t" style="left:418px;top:266.05px;font-size:7.60px;line-height:9.5px;color:#454545;font-weight:400;font-family:'Liberation Sans',sans-serif;letter-spacing:-0.089px;">350 Bytes</div>
<div class="t" style="left:764.3px;top:265.01px;font-size:9.57px;line-height:11.97px;color:#ffffff;font-weight:400;font-family:'Liberation Sans',sans-serif;letter-spacing:0.000px;">Edit</div>
<div class="t" style="left:799.8px;top:265.67px;font-size:8.54px;line-height:10.67px;color:#ffffff;font-weight:400;font-family:'Liberation Sans',sans-serif;letter-spacing:0.000px;">Web IDE</div>
<div class="t" style="left:852.5px;top:265.52px;font-size:8.76px;line-height:10.95px;color:#3462ab;font-weight:400;font-family:'Liberation Sans',sans-serif;letter-spacing:0.000px;">Pipeline Editor</div>
<div class="t" style="left:928.3px;top:265.75px;font-size:8.39px;line-height:10.49px;color:#303030;font-weight:400;font-family:'Liberation Sans',sans-serif;letter-spacing:0.000px;">Replace</div>
<div class="t" style="left:973px;top:265.38px;font-size:8.99px;line-height:11.24px;color:#303030;font-weight:400;font-family:'Liberation Sans',sans-serif;letter-spacing:0.000px;">Delete</div>
<div class="t" style="left:342.082px;top:292.88px;font-size:7.86px;line-height:9.83px;color:#9d9d9d;font-weight:400;font-family:'Liberation Mono',monospace;letter-spacing:0.000px;transform:scaleY(1.15);-webkit-text-stroke:0;">1</div>
<div class="t" style="left:360.3px;top:292.88px;font-size:7.86px;line-height:9.83px;color:#2a716d;font-weight:400;font-family:'Liberation Mono',monospace;letter-spacing:0.000px;transform:scaleY(1.15);">image</div>
<div class="t" style="left:383.89px;top:292.88px;font-size:7.86px;line-height:9.83px;color:#333333;font-weight:400;font-family:'Liberation Mono',monospace;letter-spacing:0.000px;transform:scaleY(1.15);">: </div>
<div class="t" style="left:393.32599999999996px;top:292.88px;font-size:7.86px;line-height:9.83px;color:#b82a4f;font-weight:400;font-family:'Liberation Mono',monospace;letter-spacing:0.000px;transform:scaleY(1.15);">busybox:latest</div>
<div class="t" style="left:342.082px;top:304.38px;font-size:7.86px;line-height:9.83px;color:#9d9d9d;font-weight:400;font-family:'Liberation Mono',monospace;letter-spacing:0.000px;transform:scaleY(1.15);-webkit-text-stroke:0;">2</div>
<div class="t" style="left:342.082px;top:315.87px;font-size:7.86px;line-height:9.83px;color:#9d9d9d;font-weight:400;font-family:'Liberation Mono',monospace;letter-spacing:0.000px;transform:scaleY(1.15);-webkit-text-stroke:0;">3</div>
<div class="t" style="left:360.3px;top:315.87px;font-size:7.86px;line-height:9.83px;color:#2a716d;font-weight:400;font-family:'Liberation Mono',monospace;letter-spacing:0.000px;transform:scaleY(1.15);">variables</div>
<div class="t" style="left:402.762px;top:315.87px;font-size:7.86px;line-height:9.83px;color:#333333;font-weight:400;font-family:'Liberation Mono',monospace;letter-spacing:0.000px;transform:scaleY(1.15);">:</div>
<div class="t" style="left:342.082px;top:327.36px;font-size:7.86px;line-height:9.83px;color:#9d9d9d;font-weight:400;font-family:'Liberation Mono',monospace;letter-spacing:0.000px;transform:scaleY(1.15);-webkit-text-stroke:0;">4</div>
<div class="t" style="left:369.736px;top:327.36px;font-size:7.86px;line-height:9.83px;color:#2a716d;font-weight:400;font-family:'Liberation Mono',monospace;letter-spacing:0.000px;transform:scaleY(1.15);">VAR3</div>
<div class="t" style="left:388.608px;top:327.36px;font-size:7.86px;line-height:9.83px;color:#333333;font-weight:400;font-family:'Liberation Mono',monospace;letter-spacing:0.000px;transform:scaleY(1.15);">: </div>
<div class="t" style="left:398.044px;top:327.36px;font-size:7.86px;line-height:9.83px;color:#b82a4f;font-weight:400;font-family:'Liberation Mono',monospace;letter-spacing:0.000px;transform:scaleY(1.15);">&quot;test-$SECRET_VAR&quot;</div>
<div class="t" style="left:342.082px;top:338.84px;font-size:7.86px;line-height:9.83px;color:#9d9d9d;font-weight:400;font-family:'Liberation Mono',monospace;letter-spacing:0.000px;transform:scaleY(1.15);-webkit-text-stroke:0;">5</div>
<div class="t" style="left:369.736px;top:338.84px;font-size:7.86px;line-height:9.83px;color:#2a716d;font-weight:400;font-family:'Liberation Mono',monospace;letter-spacing:0.000px;transform:scaleY(1.15);">VAR2</div>
<div class="t" style="left:388.608px;top:338.84px;font-size:7.86px;line-height:9.83px;color:#333333;font-weight:400;font-family:'Liberation Mono',monospace;letter-spacing:0.000px;transform:scaleY(1.15);">: </div>
<div class="t" style="left:398.044px;top:338.84px;font-size:7.86px;line-height:9.83px;color:#b82a4f;font-weight:400;font-family:'Liberation Mono',monospace;letter-spacing:0.000px;transform:scaleY(1.15);">&quot;test-${VAR1}&quot;</div>
<div class="t" style="left:342.082px;top:350.33px;font-size:7.86px;line-height:9.83px;color:#9d9d9d;font-weight:400;font-family:'Liberation Mono',monospace;letter-spacing:0.000px;transform:scaleY(1.15);-webkit-text-stroke:0;">6</div>
<div class="t" style="left:369.736px;top:350.33px;font-size:7.86px;line-height:9.83px;color:#2a716d;font-weight:400;font-family:'Liberation Mono',monospace;letter-spacing:0.000px;transform:scaleY(1.15);">VAR1</div>
<div class="t" style="left:388.608px;top:350.33px;font-size:7.86px;line-height:9.83px;color:#333333;font-weight:400;font-family:'Liberation Mono',monospace;letter-spacing:0.000px;transform:scaleY(1.15);">: </div>
<div class="t" style="left:398.044px;top:350.33px;font-size:7.86px;line-height:9.83px;color:#b82a4f;font-weight:400;font-family:'Liberation Mono',monospace;letter-spacing:0.000px;transform:scaleY(1.15);">&quot;${PROTECTED_VAR}-${CI_PIPELINE_ID}&quot;</div>
<div class="t" style="left:342.082px;top:361.82px;font-size:7.86px;line-height:9.83px;color:#9d9d9d;font-weight:400;font-family:'Liberation Mono',monospace;letter-spacing:0.000px;transform:scaleY(1.15);-webkit-text-stroke:0;">7</div>
<div class="t" style="left:342.082px;top:373.31px;font-size:7.86px;line-height:9.83px;color:#9d9d9d;font-weight:400;font-family:'Liberation Mono',monospace;letter-spacing:0.000px;transform:scaleY(1.15);-webkit-text-stroke:0;">8</div>
<div class="t" style="left:360.3px;top:373.31px;font-size:7.86px;line-height:9.83px;color:#2a716d;font-weight:400;font-family:'Liberation Mono',monospace;letter-spacing:0.000px;transform:scaleY(1.15);">start_evaluation</div>
<div class="t" style="left:435.788px;top:373.31px;font-size:7.86px;line-height:9.83px;color:#333333;font-weight:400;font-family:'Liberation Mono',monospace;letter-spacing:0.000px;transform:scaleY(1.15);">:</div>
<div class="t" style="left:342.082px;top:384.81px;font-size:7.86px;line-height:9.83px;color:#9d9d9d;font-weight:400;font-family:'Liberation Mono',monospace;letter-spacing:0.000px;transform:scaleY(1.15);-webkit-text-stroke:0;">9</div>
<div class="t" style="left:369.736px;top:384.81px;font-size:7.86px;line-height:9.83px;color:#2a716d;font-weight:400;font-family:'Liberation Mono',monospace;letter-spacing:0.000px;transform:scaleY(1.15);">script</div>
<div class="t" style="left:398.044px;top:384.81px;font-size:7.86px;line-height:9.83px;color:#333333;font-weight:400;font-family:'Liberation Mono',monospace;letter-spacing:0.000px;transform:scaleY(1.15);">:</div>
<div class="t" style="left:337.36400000000003px;top:396.29px;font-size:7.86px;line-height:9.83px;color:#9d9d9d;font-weight:400;font-family:'Liberation Mono',monospace;letter-spacing:0.000px;transform:scaleY(1.15);-webkit-text-stroke:0;">10</div>
<div class="t" style="left:360.3px;top:396.29px;font-size:7.86px;line-height:9.83px;color:#333333;font-weight:400;font-family:'Liberation Mono',monospace;letter-spacing:0.000px;transform:scaleY(1.15);">    - </div>
<div class="t" style="left:388.608px;top:396.29px;font-size:7.86px;line-height:9.83px;color:#b82a4f;font-weight:400;font-family:'Liberation Mono',monospace;letter-spacing:0.000px;transform:scaleY(1.15);">printenv</div>
<div class="t" style="left:337.36400000000003px;top:407.78px;font-size:7.86px;line-height:9.83px;color:#9d9d9d;font-weight:400;font-family:'Liberation Mono',monospace;letter-spacing:0.000px;transform:scaleY(1.15);-webkit-text-stroke:0;">11</div>
<div class="t" style="left:360.3px;top:407.78px;font-size:7.86px;line-height:9.83px;color:#333333;font-weight:400;font-family:'Liberation Mono',monospace;letter-spacing:0.000px;transform:scaleY(1.15);">    - </div>
<div class="t" style="left:388.608px;top:407.78px;font-size:7.86px;line-height:9.83px;color:#b82a4f;font-weight:400;font-family:'Liberation Mono',monospace;letter-spacing:0.000px;transform:scaleY(1.15);">echo &quot;VAR1=${VAR1}&quot;</div>
<div class="t" style="left:337.36400000000003px;top:419.27px;font-size:7.86px;line-height:9.83px;color:#9d9d9d;font-weight:400;font-family:'Liberation Mono',monospace;letter-spacing:0.000px;transform:scaleY(1.15);-webkit-text-stroke:0;">12</div>
<div class="t" style="left:360.3px;top:419.27px;font-size:7.86px;line-height:9.83px;color:#333333;font-weight:400;font-family:'Liberation Mono',monospace;letter-spacing:0.000px;transform:scaleY(1.15);">    - </div>
<div class="t" style="left:388.608px;top:419.27px;font-size:7.86px;line-height:9.83px;color:#b82a4f;font-weight:400;font-family:'Liberation Mono',monospace;letter-spacing:0.000px;transform:scaleY(1.15);">echo &quot;VAR2=${VAR2}&quot;</div>
<div class="t" style="left:337.36400000000003px;top:430.76px;font-size:7.86px;line-height:9.83px;color:#9d9d9d;font-weight:400;font-family:'Liberation Mono',monospace;letter-spacing:0.000px;transform:scaleY(1.15);-webkit-text-stroke:0;">13</div>
<div class="t" style="left:360.3px;top:430.76px;font-size:7.86px;line-height:9.83px;color:#333333;font-weight:400;font-family:'Liberation Mono',monospace;letter-spacing:0.000px;transform:scaleY(1.15);">    - </div>
<div class="t" style="left:388.608px;top:430.76px;font-size:7.86px;line-height:9.83px;color:#b82a4f;font-weight:400;font-family:'Liberation Mono',monospace;letter-spacing:0.000px;transform:scaleY(1.15);">echo &quot;VAR3=${VAR3}&quot;</div>
<div class="t" style="left:337.36400000000003px;top:442.25px;font-size:7.86px;line-height:9.83px;color:#9d9d9d;font-weight:400;font-family:'Liberation Mono',monospace;letter-spacing:0.000px;transform:scaleY(1.15);-webkit-text-stroke:0;">14</div>
<div class="t" style="left:360.3px;top:442.25px;font-size:7.86px;line-height:9.83px;color:#333333;font-weight:400;font-family:'Liberation Mono',monospace;letter-spacing:0.000px;transform:scaleY(1.15);">    - </div>
<div class="t" style="left:388.608px;top:442.25px;font-size:7.86px;line-height:9.83px;color:#b82a4f;font-weight:400;font-family:'Liberation Mono',monospace;letter-spacing:0.000px;transform:scaleY(1.15);">echo &quot;PROTECTED_VAR=${PROTECTED_VAR}&quot;</div>
<div class="t" style="left:337.36400000000003px;top:453.75px;font-size:7.86px;line-height:9.83px;color:#9d9d9d;font-weight:400;font-family:'Liberation Mono',monospace;letter-spacing:0.000px;transform:scaleY(1.15);-webkit-text-stroke:0;">15</div>
<div class="t" style="left:360.3px;top:453.75px;font-size:7.86px;line-height:9.83px;color:#333333;font-weight:400;font-family:'Liberation Mono',monospace;letter-spacing:0.000px;transform:scaleY(1.15);">    - </div>
<div class="t" style="left:388.608px;top:453.75px;font-size:7.86px;line-height:9.83px;color:#b82a4f;font-weight:400;font-family:'Liberation Mono',monospace;letter-spacing:0.000px;transform:scaleY(1.15);">echo &quot;SECRET_VAR=${SECRET_VAR}&quot;</div>
<div class="t" style="left:337.36400000000003px;top:465.24px;font-size:7.86px;line-height:9.83px;color:#9d9d9d;font-weight:400;font-family:'Liberation Mono',monospace;letter-spacing:0.000px;transform:scaleY(1.15);-webkit-text-stroke:0;">16</div>
<div class="t" style="left:360.3px;top:465.24px;font-size:7.86px;line-height:9.83px;color:#333333;font-weight:400;font-family:'Liberation Mono',monospace;letter-spacing:0.000px;transform:scaleY(1.15);">    - </div>
<div class="t" style="left:388.608px;top:465.24px;font-size:7.86px;line-height:9.83px;color:#b82a4f;font-weight:400;font-family:'Liberation Mono',monospace;letter-spacing:0.000px;transform:scaleY(1.15);">echo Done</div>
<div class="t" style="left:474.5px;top:58.52px;font-size:11.00px;line-height:13.75px;color:#111;font-weight:700;font-family:'Liberation Sans',sans-serif;letter-spacing:0.000px;">Σ</div>
<div style="position:absolute;left:117px;top:6px;width:13px;height:16px;background:linear-gradient(90deg,rgba(240,240,244,0),#f0f0f4);"></div>
<div style="position:absolute;left:268px;top:6px;width:13px;height:16px;background:linear-gradient(90deg,rgba(240,240,244,0),#f0f0f4);"></div>
<div style="position:absolute;left:420px;top:6px;width:13px;height:16px;background:linear-gradient(90deg,rgba(255,255,255,0),#fff);"></div>
<div style="position:absolute;left:568px;top:6px;width:13px;height:16px;background:linear-gradient(90deg,rgba(240,240,244,0),#f0f0f4);"></div>
<div style="position:absolute;left:0;top:255.6px;width:24.7px;height:15.2px;background:#1c1c1c;border-radius:0 3px 3px 0;"></div>
<div style="position:absolute;left:1.6px;top:257.5px;font:bold 8.2px 'Liberation Mono',monospace;letter-spacing:-0.3px;color:#f4f4f4;line-height:12px;">3:21</div>
<div style="position:absolute;left:0;top:276.6px;width:24.7px;height:26.8px;background:#1c1c1c;border-radius:0 3px 3px 0;"></div>
<div style="position:absolute;left:5.8px;top:285px;width:11.1px;height:11.2px;background:#e8543a;border-radius:1px;"></div>
<div style="position:absolute;left:7.5px;top:570px;width:138px;height:138px;background:#958b91;border-radius:50%;"></div>
<div style="position:absolute;left:0;top:73.6px;width:1104px;height:0.6px;background:#55556a;"></div>
<svg style="position:absolute;left:399.5px;top:406px;" width="5" height="11" viewBox="0 0 5 11"><path d="M0.8 0.6 H4.2 M2.5 0.6 V10.4 M0.8 10.4 H4.2" stroke="#222" stroke-width="0.8" fill="none"/></svg>
</div></body></html>
